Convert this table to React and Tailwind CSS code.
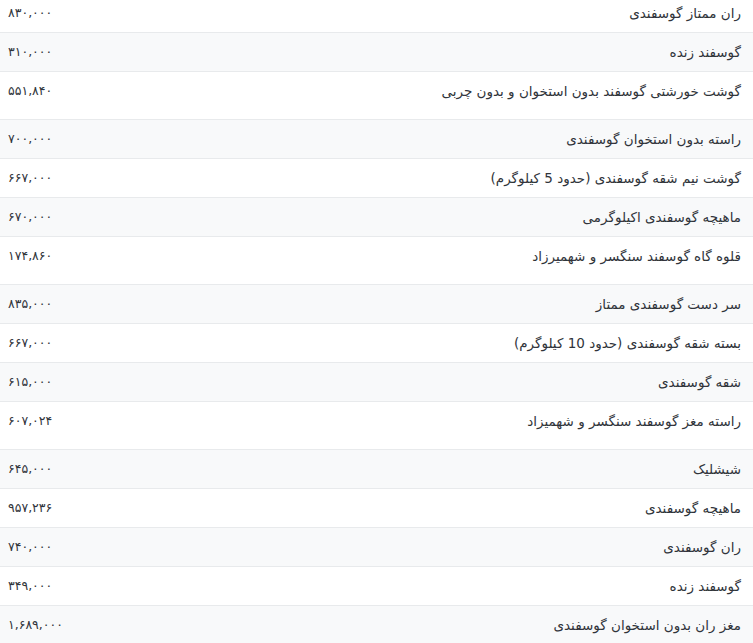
import React from 'react';

const rows = [
  { name: 'ران ممتاز گوسفندی', price: '۸۳۰,۰۰۰' },
  { name: 'گوسفند زنده', price: '۳۱۰,۰۰۰' },
  { name: 'گوشت خورشتی گوسفند بدون استخوان و بدون چربی', price: '۵۵۱,۸۴۰', tall: true },
  { name: 'راسته بدون استخوان گوسفندی', price: '۷۰۰,۰۰۰' },
  { name: 'گوشت نیم شقه گوسفندی (حدود 5 کیلوگرم)', price: '۶۶۷,۰۰۰' },
  { name: 'ماهیچه گوسفندی اکیلوگرمی', price: '۶۷۰,۰۰۰' },
  { name: 'قلوه گاه گوسفند سنگسر و شهمیرزاد', price: '۱۷۴,۸۶۰', tall: true },
  { name: 'سر دست گوسفندی ممتاز', price: '۸۳۵,۰۰۰' },
  { name: 'بسته شقه گوسفندی (حدود 10 کیلوگرم)', price: '۶۶۷,۰۰۰' },
  { name: 'شقه گوسفندی', price: '۶۱۵,۰۰۰' },
  { name: 'راسته مغز گوسفند سنگسر و شهمیزاد', price: '۶۰۷,۰۲۴', tall: true },
  { name: 'شیشلیک', price: '۶۴۵,۰۰۰' },
  { name: 'ماهیچه گوسفندی', price: '۹۵۷,۲۳۶' },
  { name: 'ران گوسفندی', price: '۷۴۰,۰۰۰' },
  { name: 'گوسفند زنده', price: '۳۴۹,۰۰۰' },
  { name: 'مغز ران بدون استخوان گوسفندی', price: '۱,۶۸۹,۰۰۰' },
];

const App = () => {
  return (
    <div
      className="w-[753px] h-[643px] overflow-hidden bg-white text-[#30343a]"
      style={{ fontFamily: '"DejaVu Sans", sans-serif' }}
    >
      <div className="-mt-[6px]" dir="rtl">
        {rows.map((r, i) => (
          <div
            key={i}
            className={`flex justify-between items-start border-b border-[#e8eaec] pt-[8px] pr-[12px] pl-[8px] leading-[22px] ${
              r.tall ? 'h-[48px]' : 'h-[39px]'
            } ${i % 2 === 1 ? 'bg-[#f8f9fa]' : 'bg-white'}`}
          >
            <span className="text-[13.5px]">{r.name}</span>
            <span className="text-[12.5px]">{r.price}</span>
          </div>
        ))}
      </div>
      <div className="flex h-[4px]">
        <div className="w-[200px] border-t border-[#cfd1d3] bg-white"></div>
        <div className="flex-1 bg-[#0b1a22]"></div>
      </div>
    </div>
  );
};

export default App;
